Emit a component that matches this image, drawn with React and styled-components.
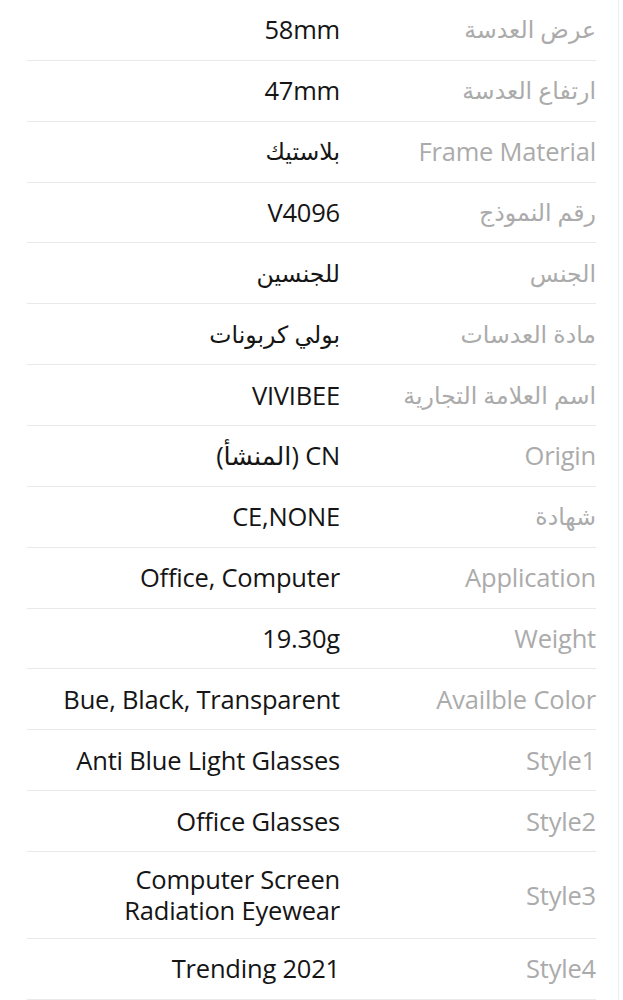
import React from "react";
import styled, { createGlobalStyle } from "styled-components";

const Global = createGlobalStyle`
  html, body { margin: 0; padding: 0; background: #ffffff; }
  body { font-family: "Open Sans", "DejaVu Sans", sans-serif; }
`;

const Page = styled.div`
  box-sizing: border-box;
  width: 619px;
  min-height: 1000px;
  padding: 0 22px 0 27px;
  border-right: 1px solid #ededed;
  background: #fff;
`;

const Table = styled.div`
  display: flex;
  flex-direction: column;
`;

const Row = styled.div`
  box-sizing: border-box;
  display: grid;
  grid-template-columns: 1fr 256px;
  align-items: center;
  min-height: 60.86px;
  padding: 12px 0;
  border-bottom: 1px solid #e9e9e9;
  line-height: 31px;
`;

const Value = styled.div`
  text-align: right;
  color: #151515;
  font-size: ${(p) => (p.$arabic ? "23.6px" : "25.5px")};
  letter-spacing: -0.2px;
`;

const Label = styled.div`
  text-align: right;
  color: #ababab;
  font-size: ${(p) => (p.$arabic ? "23.6px" : "25.5px")};
  letter-spacing: -0.2px;
`;

const rows = [
  ["عرض العدسة", "58mm"],
  ["ارتفاع العدسة", "47mm"],
  ["Frame Material", "بلاستيك"],
  ["رقم النموذج", "V4096"],
  ["الجنس", "للجنسين"],
  ["مادة العدسات", "بولي كربونات"],
  ["اسم العلامة التجارية", "VIVIBEE"],
  ["Origin", "CN (المنشأ)"],
  ["شهادة", "CE,NONE"],
  ["Application", "Office, Computer"],
  ["Weight", "19.30g"],
  ["Availble Color", "Bue, Black, Transparent"],
  ["Style1", "Anti Blue Light Glasses"],
  ["Style2", "Office Glasses"],
  ["Style3", ["Computer Screen", "Radiation Eyewear"]],
  ["Style4", "Trending 2021"],
];

const isArabic = (s) => typeof s === "string" && /^[\u0600-\u06FF\s]+$/.test(s);

export default function App() {
  return (
    <>
      <Global />
      <Page>
        <Table>
          {rows.map(([label, value]) => (
            <Row key={label}>
              <Value dir="rtl" $arabic={isArabic(value)}>
                {Array.isArray(value)
                  ? value.map((line, i) => (
                      <React.Fragment key={i}>
                        {i > 0 && <br />}
                        {line}
                      </React.Fragment>
                    ))
                  : value}
              </Value>
              <Label dir="rtl" $arabic={isArabic(label)}>
                {label}
              </Label>
            </Row>
          ))}
        </Table>
      </Page>
    </>
  );
}
